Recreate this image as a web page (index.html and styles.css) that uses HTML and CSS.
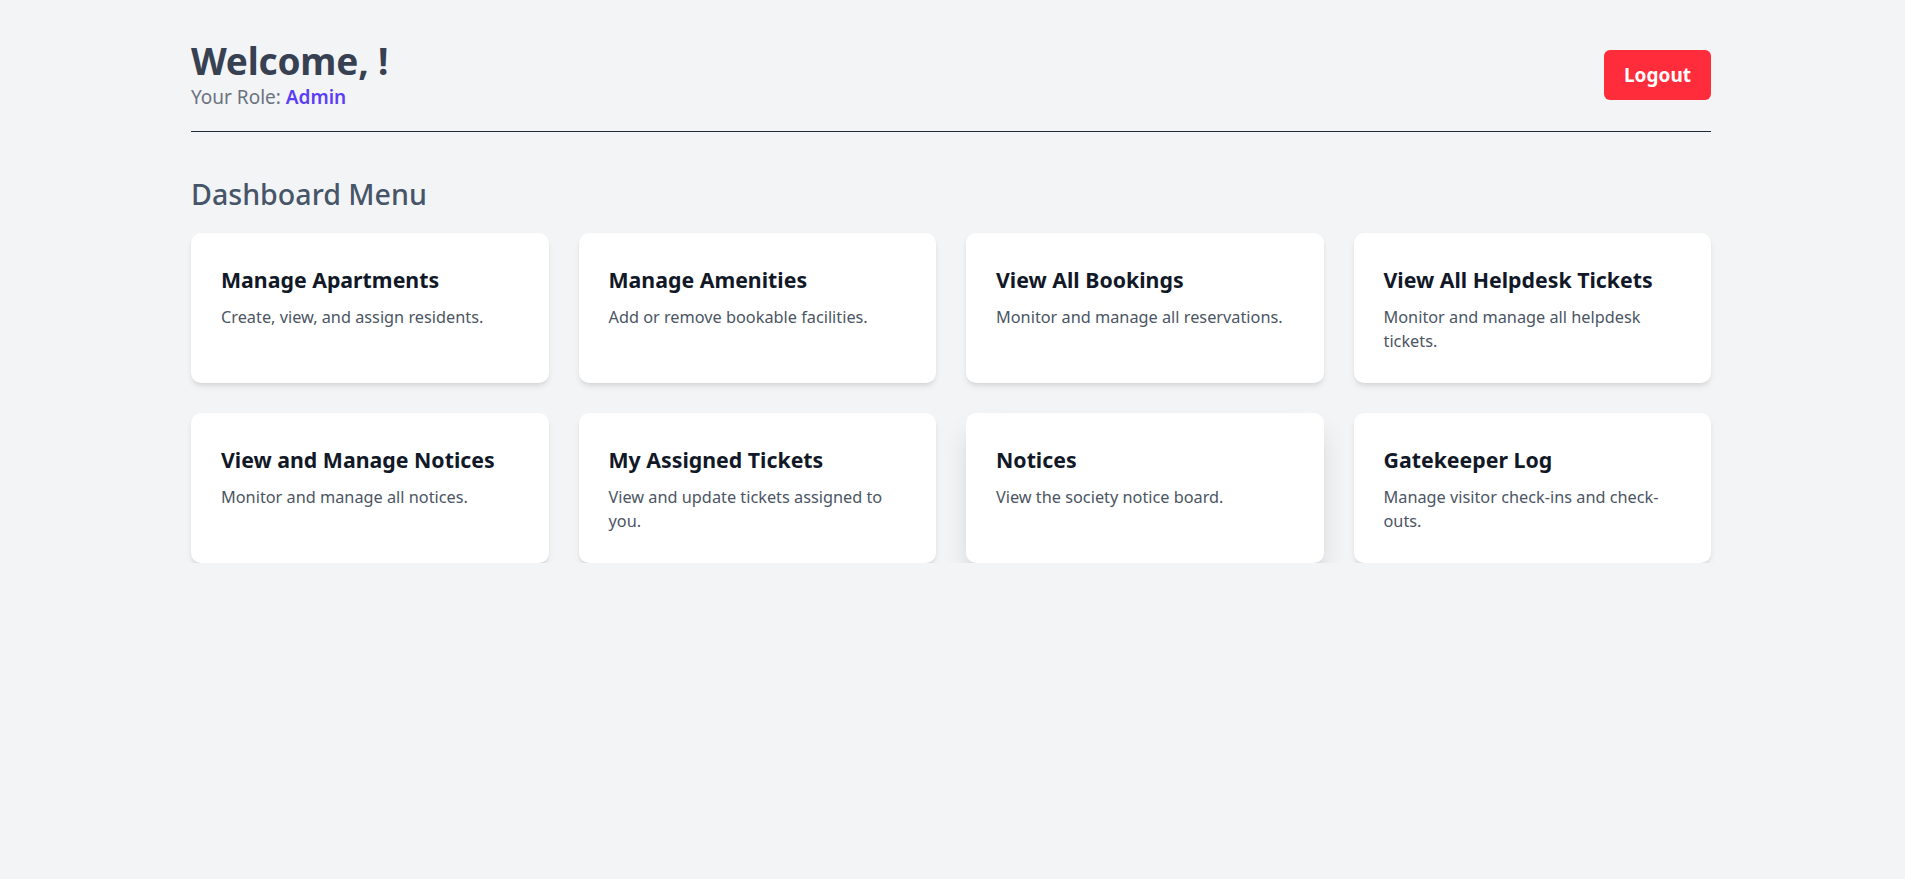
FILE: index.html
```html
<!DOCTYPE html>
<html lang="en">
<head>
<meta charset="utf-8">
<title>Dashboard</title>
<link rel="stylesheet" href="styles.css">
</head>
<body>
<div class="page">
  <header class="header">
    <div class="welcome">
      <h1 class="welcome-title">Welcome, !</h1>
      <p class="welcome-role">Your Role: <span class="role-name">Admin</span></p>
    </div>
    <button class="logout-btn" type="button">Logout</button>
  </header>

  <h2 class="section-title">Dashboard Menu</h2>

  <div class="menu-grid">
    <a class="card" href="#">
      <h3 class="card-title">Manage Apartments</h3>
      <p class="card-desc">Create, view, and assign residents.</p>
    </a>
    <a class="card" href="#">
      <h3 class="card-title">Manage Amenities</h3>
      <p class="card-desc">Add or remove bookable facilities.</p>
    </a>
    <a class="card" href="#">
      <h3 class="card-title">View All Bookings</h3>
      <p class="card-desc">Monitor and manage all reservations.</p>
    </a>
    <a class="card" href="#">
      <h3 class="card-title">View All Helpdesk Tickets</h3>
      <p class="card-desc">Monitor and manage all helpdesk tickets.</p>
    </a>
    <a class="card" href="#">
      <h3 class="card-title">View and Manage Notices</h3>
      <p class="card-desc">Monitor and manage all notices.</p>
    </a>
    <a class="card" href="#">
      <h3 class="card-title">My Assigned Tickets</h3>
      <p class="card-desc">View and update tickets assigned to you.</p>
    </a>
    <a class="card card--hover" href="#">
      <h3 class="card-title">Notices</h3>
      <p class="card-desc">View the society notice board.</p>
    </a>
    <a class="card" href="#">
      <h3 class="card-title">Gatekeeper Log</h3>
      <p class="card-desc">Manage visitor check-ins and check-outs.</p>
    </a>
  </div>
</div>
</body>
</html>
```

FILE: styles.css
```css
* {
  box-sizing: border-box;
}

body {
  margin: 0;
  padding-right: 3px;
  background: #f3f4f6;
  font-family: "Noto Sans", "Open Sans", sans-serif;
  color: #1f2937;
}

.page {
  max-width: 1520px;
  margin: 0 auto;
  padding-top: 38px;
}

.header {
  display: flex;
  justify-content: space-between;
  align-items: center;
  padding-bottom: 19px;
  border-bottom: 1px solid #1f2937;
}

.welcome-title {
  margin: 0;
  font-size: 37px;
  line-height: 45px;
  font-weight: 700;
  color: #374151;
  letter-spacing: -0.2px;
}

.welcome-role {
  margin: 0;
  font-size: 19px;
  line-height: 29px;
  color: #6b7280;
}

.role-name {
  color: #5b3df5;
  font-weight: 600;
}

.logout-btn {
  width: 107px;
  height: 50px;
  border: none;
  border-radius: 6px;
  background: #ff2d3b;
  color: #ffffff;
  font-family: inherit;
  font-size: 19px;
  font-weight: 700;
  cursor: pointer;
}

.section-title {
  margin: 44px 0 21px;
  font-size: 28.6px;
  line-height: 36px;
  font-weight: 500;
  color: #475569;
}

.menu-grid {
  display: grid;
  grid-template-columns: repeat(4, 1fr);
  gap: 30px;
}

.card {
  display: block;
  min-height: 150px;
  padding: 32px 30px 30px;
  background: #ffffff;
  border-radius: 10px;
  text-decoration: none;
  box-shadow: 0 4px 6px -1px rgba(0, 0, 0, 0.1), 0 2px 4px -2px rgba(0, 0, 0, 0.08);
}

.card:hover,
.card--hover {
  box-shadow: 0 16px 28px -4px rgba(0, 0, 0, 0.14), 0 8px 10px -6px rgba(0, 0, 0, 0.1);
}

.card-title {
  margin: 0 0 10px;
  font-size: 21.3px;
  line-height: 30px;
  font-weight: 700;
  color: #111827;
}

.card-desc {
  margin: 0;
  font-size: 16.3px;
  line-height: 24px;
  color: #4b5563;
}
```
